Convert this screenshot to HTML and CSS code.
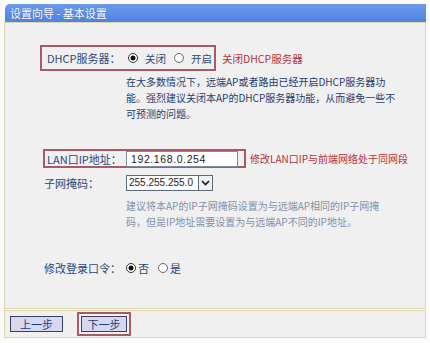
FILE: index.html
```html
<!DOCTYPE html>
<html lang="zh-CN">
<head>
    <meta charset="UTF-8">
    <meta name="viewport" content="width=device-width, initial-scale=1.0">
    <title>设置向导 - 基本设置</title>
    <link rel="stylesheet" href="styles.css">
</head>
<body>

<div class="window">
    <div class="title">设置向导 - 基本设置</div>

    <div class="panel">
        <div class="row first">
            <div class="mark mark-dhcp">
                <span class="label">DHCP服务器：</span>
                <span class="radio checked"></span><span class="opt">关闭</span>
                <span class="radio"></span><span class="opt">开启</span>
            </div>
            <span class="note">关闭DHCP服务器</span>
        </div>

        <p class="desc">在大多数情况下，远端AP或者路由已经开启DHCP服务器功<br>能。强烈建议关闭本AP的DHCP服务器功能，从而避免一些不<br>可预测的问题。</p>

        <div class="row lan">
            <div class="mark mark-lan">
                <span class="label">LAN口IP地址：</span>
                <span class="input">192.168.0.254</span>
            </div>
            <span class="note">修改LAN口IP与前端网络处于同网段</span>
        </div>

        <div class="row plain mask">
            <span class="label">子网掩码：</span>
            <span class="select">
                <span class="select-value">255.255.255.0</span>
                <span class="select-arrow">
                    <svg width="9" height="6" viewBox="0 0 9 6"><polyline points="1,1 4.5,4.5 8,1" fill="none" stroke="#1a1a1a" stroke-width="1.6"/></svg>
                </span>
            </span>
        </div>

        <p class="desc light">建议将本AP的IP子网掩码设置为与远端AP相同的IP子网掩<br>码，但是IP地址需要设置为与远端AP不同的IP地址。</p>

        <div class="row plain login">
            <span class="label">修改登录口令：</span>
            <span class="radio checked"></span><span class="opt tight">否</span>
            <span class="radio"></span><span class="opt tight">是</span>
        </div>
    </div>

    <div class="footer">
        <button class="btn">上一步</button>
        <div class="mark mark-btn">
            <button class="btn">下一步</button>
        </div>
    </div>
</div>

</body>
</html>
```

FILE: styles.css
```css
body {
    margin: 0;
    padding: 0;
    background: #fbfbfa;
    font-family: "Noto Sans CJK SC", "Noto Sans", sans-serif;
    color: #2a4878;
}
.window {
    width: 422px;
    margin: 4px 0 0 4px;
}
.title {
    height: 18px;
    margin-left: 1px;
    padding-left: 5px;
    background: linear-gradient(#6c9aea, #4f83e2);
    border-radius: 5px 0 0 0;
    color: #fff;
    font-size: 11px;
    line-height: 18px;
    text-shadow: 0 0 1px #3a62b0;
}
.panel {
    box-sizing: border-box;
    height: 287px;
    padding-top: 22px;
    background: #f0f0f0;
    border: 1px solid #ddd4b0;
}
.row {
    display: flex;
    align-items: center;
    font-size: 11px;
}
.mark {
    display: flex;
    align-items: center;
    box-sizing: border-box;
    border: 2px solid #a85a66;
}
.mark-dhcp {
    width: 176px;
    height: 26px;
    margin-left: 35px;
    padding-left: 5px;
}
.mark-dhcp .label {
    width: 81px;
}
.mark-dhcp .opt {
    margin: 0 8px 0 7px;
    font-size: 10.5px;
}
.mark-lan {
    width: 203px;
    height: 19px;
    margin-left: 38px;
    padding-left: 2px;
}
.mark-lan .label {
    width: 79px;
}
.label {
    flex-shrink: 0;
    white-space: nowrap;
}
.note {
    margin-left: 6px;
    color: #b5323c;
    font-size: 10.5px;
    white-space: nowrap;
}
.lan .note {
    margin-left: 4px;
    font-size: 10px;
}
.radio {
    box-sizing: border-box;
    width: 10px;
    height: 10px;
    border: 1px solid #6a6a6a;
    border-radius: 50%;
    background: #fff;
    flex-shrink: 0;
}
.radio.checked {
    border-color: #333;
    background: radial-gradient(circle, #111 0 2.2px, #fff 2.8px);
}
.opt {
    margin: 0 9px 0 8px;
    white-space: nowrap;
}
.opt.tight {
    margin: 0 9px 0 2px;
}
.desc {
    margin: 3px 0 0 121px;
    font-size: 10px;
    line-height: 16px;
    color: #1f3d70;
    white-space: nowrap;
}
.desc.light {
    margin-top: 7px;
    color: #8190aa;
}
.lan {
    margin-top: 27px;
}
.input {
    box-sizing: border-box;
    width: 112px;
    height: 16px;
    padding-left: 4px;
    background: #fff;
    border: 1px solid #7f8ba0;
    font-family: "Liberation Sans", sans-serif;
    font-size: 10.5px;
    letter-spacing: 0.6px;
    line-height: 14px;
    color: #222;
}
.plain {
    margin-left: 39px;
}
.plain .label {
    width: 82px;
}
.mask {
    margin-top: 7px;
}
.select {
    display: flex;
    box-sizing: border-box;
    width: 87px;
    height: 16px;
    background: #fff;
    border: 1px solid #5c6a80;
}
.select-value {
    flex: 1;
    padding-left: 2px;
    font-family: "Liberation Sans", sans-serif;
    font-size: 10px;
    line-height: 14px;
    color: #222;
    white-space: nowrap;
}
.select-arrow {
    display: flex;
    align-items: center;
    justify-content: center;
    width: 13px;
    flex-shrink: 0;
    border-left: 1px solid #5c6a80;
    background: #eef0f6;
}
.login {
    margin-top: 30px;
}
.footer {
    display: flex;
    align-items: center;
    box-sizing: border-box;
    height: 28px;
    margin-top: 1px;
    padding-left: 5px;
    background: #f0f0f0;
    border: 1px solid #ddd4b0;
}
.btn {
    box-sizing: border-box;
    width: 53px;
    height: 16px;
    padding: 0;
    background: #d6d8f0;
    border: 1px solid #3c3f5c;
    color: #1f3a7a;
    font-family: "Noto Sans CJK SC", sans-serif;
    font-size: 11px;
    line-height: 14px;
    cursor: pointer;
}
.mark-btn {
    height: 24px;
    margin-left: 14px;
    padding: 0 2px;
}
.mark-btn .btn {
    width: 46px;
}
```
